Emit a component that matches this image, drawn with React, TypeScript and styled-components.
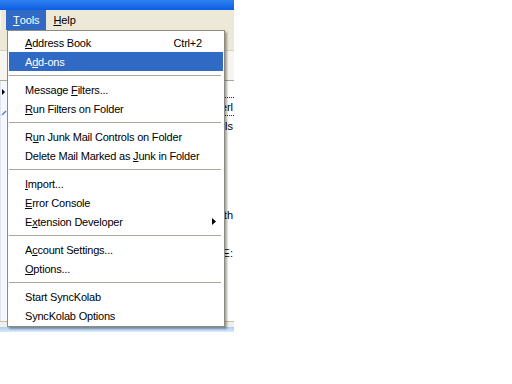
import React from "react";
import styled, { createGlobalStyle } from "styled-components";

const Global = createGlobalStyle`
  html, body { margin: 0; padding: 0; background: #ffffff; }
  body { font-family: "Liberation Sans", Arial, sans-serif; }
`;

const Window = styled.div`
  width: 234px;
  height: 332px;
  position: relative;
  overflow: hidden;
  display: flex;
  flex-direction: column;
  background: #ffffff;
  font-family: "Liberation Sans", Arial, sans-serif;
  font-size: 11px;
`;

const TitleBar = styled.div`
  height: 10px;
  flex: none;
  background: linear-gradient(#2f80f0, #0b5de2);
`;

const MenuBar = styled.div`
  height: 20px;
  flex: none;
  display: flex;
  align-items: stretch;
  padding-left: 5px;
  background: #ece9d8;
  border-left: 1px solid #f8f7f0;
  box-sizing: border-box;
  letter-spacing: -0.1px;
`;

const MenuTitle = styled.div<{ $active?: boolean }>`
  display: flex;
  align-items: center;
  padding: 0 7px 0 7px;
  background: ${(p) => (p.$active ? "#316ac5" : "transparent")};
  color: ${(p) => (p.$active ? "#ffffff" : "#000000")};
`;

const U = styled.span`
  text-decoration: underline;
  text-underline-offset: 1px;
`;

const Toolbar = styled.div`
  height: 20px;
  flex: none;
  background: #ece9d8;
  border-bottom: 1px solid #d6d1bd;
`;

const Header = styled.div`
  height: 29px;
  flex: none;
  background: #f6f5ef;
  border-bottom: 1px solid #aca899;
`;

const Body = styled.div`
  flex: 1;
  display: flex;
  min-height: 0;
`;

const LeftPane = styled.div`
  width: 7px;
  flex: none;
  display: flex;
  flex-direction: column;
  align-items: flex-start;
  background: #f4f7fc;
  border-left: 1px solid #dfe6f2;
  box-sizing: border-box;
`;

const Expander = styled.div`
  width: 0;
  height: 0;
  margin: 8px 0 0 1px;
  border-top: 3px solid transparent;
  border-bottom: 3px solid transparent;
  border-left: 3px solid #000000;
`;

const Pencil = styled.svg`
  margin: 15px 0 0 0;
  display: block;
`;

const ListPane = styled.div`
  flex: 1;
  display: flex;
  flex-direction: column;
  min-width: 0;
`;

const Row = styled.div<{ $h: number; $focus?: boolean }>`
  height: ${(p) => p.$h}px;
  flex: none;
  box-sizing: border-box;
  display: flex;
  align-items: center;
  justify-content: flex-end;
  padding-right: 1px;
  white-space: nowrap;
  overflow: hidden;
  color: #000000;
  border-top: ${(p) => (p.$focus ? "1px dotted #333" : "none")};
  border-bottom: ${(p) => (p.$focus ? "1px dotted #333" : "none")};
`;

const StatusBar = styled.div`
  height: 5px;
  flex: none;
  background: #f1f0ea;
  border-top: 1px solid #c9bfa6;
`;

const BottomEdge = styled.div`
  height: 5px;
  flex: none;
  background: linear-gradient(#a9cdf3, #d8eafb);
`;

const Menu = styled.div`
  position: absolute;
  left: 7px;
  top: 30px;
  width: 218px;
  box-sizing: border-box;
  padding: 2px 1px 1px 1px;
  background: #ffffff;
  border: 1px solid #8d8a80;
  box-shadow: 2px 2px 2px rgba(0, 0, 0, 0.35);
  color: #000000;
  font-size: 11px;
  letter-spacing: -0.2px;
  z-index: 2;
`;

const Item = styled.div<{ $selected?: boolean }>`
  height: 19px;
  display: flex;
  align-items: center;
  padding: 0 7px 0 16px;
  white-space: nowrap;
  background: ${(p) => (p.$selected ? "#316ac5" : "transparent")};
  color: ${(p) => (p.$selected ? "#ffffff" : "#000000")};
`;

const Label = styled.span`
  flex: 1;
`;

const Shortcut = styled.span`
  margin-right: 14px;
`;

const Separator = styled.div`
  height: 1px;
  margin: 4px 2px 4px 0;
  background: #aca899;
`;

const Arrow = () => (
  <svg width="4" height="7" viewBox="0 0 4 7">
    <polygon points="0,0 4,3.5 0,7" fill="#000" />
  </svg>
);

type Entry =
  | { sep: true }
  | {
      sep?: false;
      pre?: string;
      key?: string;
      post?: string;
      shortcut?: string;
      sub?: boolean;
      selected?: boolean;
    };

const entries: Entry[] = [
  { key: "A", post: "ddress Book", shortcut: "Ctrl+2" },
  { pre: "A", key: "d", post: "d-ons", selected: true },
  { sep: true },
  { pre: "Message ", key: "F", post: "ilters..." },
  { key: "R", post: "un Filters on Folder" },
  { sep: true },
  { pre: "R", key: "u", post: "n Junk Mail Controls on Folder" },
  { pre: "Delete Mail Marked as ", key: "J", post: "unk in Folder" },
  { sep: true },
  { key: "I", post: "mport..." },
  { key: "E", post: "rror Console" },
  { pre: "E", key: "x", post: "tension Developer", sub: true },
  { sep: true },
  { pre: "A", key: "c", post: "count Settings..." },
  { key: "O", post: "ptions..." },
  { sep: true },
  { pre: "Start SyncKolab" },
  { pre: "SyncKolab Options" },
];

const rows: { h: number; text?: string; focus?: boolean }[] = [
  { h: 16 },
  { h: 19, text: "Re: Perl", focus: true },
  { h: 19, text: "Perls" },
  { h: 70 },
  { h: 19, text: "Smith" },
  { h: 19 },
  { h: 19, text: "RE:" },
];

export default function App() {
  return (
    <>
      <Global />
      <Window>
        <TitleBar />
        <MenuBar>
          <MenuTitle $active>
            <U>T</U>ools
          </MenuTitle>
          <MenuTitle>
            <U>H</U>elp
          </MenuTitle>
        </MenuBar>
        <Toolbar />
        <Header />
        <Body>
          <LeftPane>
            <Expander />
            <Pencil width="6" height="6" viewBox="0 0 6 6">
              <path d="M0.5 5.5 L1 4 L4.5 0.5 L5.5 1.5 L2 5 Z" fill="#5a7fc8" />
            </Pencil>
          </LeftPane>
          <ListPane>
            {rows.map((r, i) => (
              <Row key={i} $h={r.h} $focus={r.focus}>
                {r.text}
              </Row>
            ))}
          </ListPane>
        </Body>
        <StatusBar />
        <BottomEdge />
        <Menu>
          {entries.map((e, i) =>
            e.sep ? (
              <Separator key={i} />
            ) : (
              <Item key={i} $selected={e.selected}>
                <Label>
                  {e.pre}
                  {e.key && <U>{e.key}</U>}
                  {e.post}
                </Label>
                {e.shortcut && <Shortcut>{e.shortcut}</Shortcut>}
                {e.sub && <Arrow />}
              </Item>
            )
          )}
        </Menu>
      </Window>
    </>
  );
}
